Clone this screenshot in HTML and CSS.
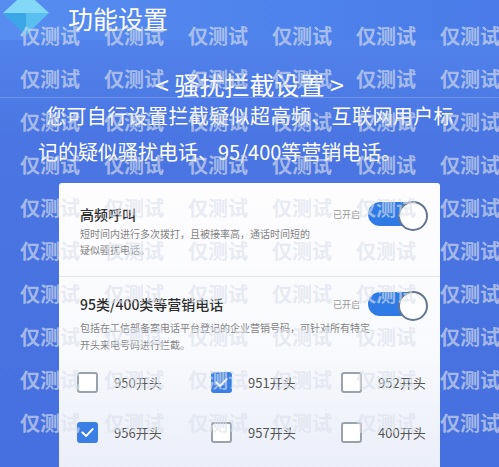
FILE: index.html
```html
<!DOCTYPE html>
<html lang="zh-CN">
  <head>
    <meta charset="UTF-8" />
    <meta name="viewport" content="width=device-width, initial-scale=1.0" />
    <title>功能设置</title>
    <link rel="stylesheet" href="styles.css">
  </head>
  <body>
    <div class="screen">
      <header class="topbar">
        <svg class="logo" width="46" height="40" viewBox="0 0 46 40">
          <polygon points="23,-8 46,13 23,35 0,13" fill="#58bff0" />
          <polygon points="23,-8 46,13 23,13 0,13" fill="#84d8f7" />
          <polygon points="0,13 23,35 23,13" fill="#3aa6e6" />
        </svg>
        <h1>功能设置</h1>
      </header>

      <div class="subbar">&lt; 骚扰拦截设置 &gt;</div>

      <div class="intro">
        <p class="line1">您可自行设置拦截疑似超高频、互联网用户标</p>
        <p class="line2">记的疑似骚扰电话、95/400等营销电话。</p>
      </div>

      <div class="card">
        <section class="item first">
          <div class="item-head">
            <h2>高频呼叫</h2>
            <span class="state">已开启</span>
            <span class="toggle"></span>
          </div>
          <p class="desc">短时间内进行多次拨打，且被接率高，通话时间短的<br />疑似骚扰电话。</p>
        </section>

        <section class="item second">
          <div class="item-head">
            <h2>95类/400类等营销电话</h2>
            <span class="state">已开启</span>
            <span class="toggle"></span>
          </div>
          <p class="desc">包括在工信部备案电话平台登记的企业营销号码，可针对所有特定<br />开头来电号码进行拦截。</p>

          <div class="options">
            <label class="option"><span class="box"></span>950开头</label>
            <label class="option"><span class="box checked"><svg viewBox="0 0 20 20" width="20" height="20"><polyline points="4,10 8.5,14 16,6" /></svg></span>951开头</label>
            <label class="option"><span class="box"></span>952开头</label>
            <label class="option"><span class="box checked"><svg viewBox="0 0 20 20" width="20" height="20"><polyline points="4,10 8.5,14 16,6" /></svg></span>956开头</label>
            <label class="option"><span class="box"></span>957开头</label>
            <label class="option"><span class="box"></span>400开头</label>
          </div>
        </section>
      </div>

      <!-- marca de agua -->
      <div class="watermark">
        <div class="wm-row"><span>仅测试</span><span>仅测试</span><span>仅测试</span><span>仅测试</span><span>仅测试</span><span>仅测试</span></div>
        <div class="wm-row"><span>仅测试</span><span>仅测试</span><span>仅测试</span><span>仅测试</span><span>仅测试</span><span>仅测试</span></div>
        <div class="wm-row"><span>仅测试</span><span>仅测试</span><span>仅测试</span><span>仅测试</span><span>仅测试</span><span>仅测试</span></div>
        <div class="wm-row"><span>仅测试</span><span>仅测试</span><span>仅测试</span><span>仅测试</span><span>仅测试</span><span>仅测试</span></div>
        <div class="wm-row"><span>仅测试</span><span>仅测试</span><span>仅测试</span><span>仅测试</span><span>仅测试</span><span>仅测试</span></div>
        <div class="wm-row"><span>仅测试</span><span>仅测试</span><span>仅测试</span><span>仅测试</span><span>仅测试</span><span>仅测试</span></div>
        <div class="wm-row"><span>仅测试</span><span>仅测试</span><span>仅测试</span><span>仅测试</span><span>仅测试</span><span>仅测试</span></div>
        <div class="wm-row"><span>仅测试</span><span>仅测试</span><span>仅测试</span><span>仅测试</span><span>仅测试</span><span>仅测试</span></div>
        <div class="wm-row"><span>仅测试</span><span>仅测试</span><span>仅测试</span><span>仅测试</span><span>仅测试</span><span>仅测试</span></div>
        <div class="wm-row"><span>仅测试</span><span>仅测试</span><span>仅测试</span><span>仅测试</span><span>仅测试</span><span>仅测试</span></div>
      </div>
    </div>
  </body>
</html>
```

FILE: styles.css
```css
* {
  box-sizing: border-box;
  margin: 0;
  padding: 0;
}

body {
  font-family: "Noto Sans CJK SC", "Noto Sans", sans-serif;
  background: #4870df;
}

.screen {
  position: relative;
  width: 499px;
  height: 467px;
  overflow: hidden;
  background: linear-gradient(180deg, #5487ee 0%, #4a75e2 30%, #4670df 100%);
}

/* cabecera */
.topbar {
  display: flex;
  align-items: center;
  height: 40px;
  background: linear-gradient(90deg, #578cf0, #4e82ec 60%, #4a7be8);
}

.logo {
  margin-left: 3px;
  align-self: flex-start;
}

.topbar h1 {
  margin-left: 19px;
  margin-top: -4px;
  font-size: 25px;
  font-weight: 400;
  line-height: 30px;
  color: #fff;
}

.subbar {
  height: 58px;
  padding-top: 30px;
  line-height: 28px;
  font-size: 25px;
  text-align: center;
  color: #fff;
  border-bottom: 1px solid rgba(255, 255, 255, 0.18);
}

.intro {
  color: #fff;
  font-size: 20px;
  line-height: 36px;
}

.intro .line1 {
  padding-left: 46px;
  letter-spacing: 0.4px;
}

.intro .line2 {
  padding-left: 38px;
}

/* tarjeta */
.card {
  margin: 13px 0 0 59px;
  width: 381px;
  height: 300px;
  border-radius: 3px;
  background: linear-gradient(180deg, #fdfdfe 0%, #f9fafd 55%, #e9edf9 100%);
}

.item {
  padding: 19px 13px 0 21px;
}

.item.first {
  padding-bottom: 18px;
  border-bottom: 1px solid #e4e6eb;
}

.item.second {
  padding-top: 15px;
}

.item-head {
  display: flex;
  align-items: center;
  height: 24px;
}

.item-head h2 {
  flex: 1;
  font-size: 14px;
  font-weight: 500;
  color: #2e2e2e;
}

.state {
  font-size: 9px;
  color: #9a9a9a;
  margin-right: 8px;
}

.toggle {
  display: flex;
  justify-content: flex-end;
  width: 59px;
  height: 24px;
  border-radius: 12px;
  background: #2f7be6;
}

.toggle::after {
  content: "";
  width: 26px;
  height: 26px;
  margin: -1px -1px 0 0;
  border-radius: 50%;
  background: #fff;
  border: 2px solid #66768f;
}

.desc {
  font-size: 10px;
  line-height: 16px;
  color: #848484;
}

.item.second .desc {
  margin-top: 3px;
  line-height: 17px;
}

.options {
  display: grid;
  grid-template-columns: 134px 130px 110px;
  grid-auto-rows: 50px;
  margin: 4px 0 0 -3px;
}

.option {
  display: flex;
  align-items: center;
  font-size: 13px;
  color: #555;
}

.box {
  display: flex;
  width: 21px;
  height: 21px;
  margin-right: 16px;
  border: 2px solid #9aa3ad;
  border-radius: 3px;
  background: #fff;
}

.box.checked {
  border-color: #3b7fe4;
  background: #3b7fe4;
  align-items: center;
  justify-content: center;
}

.box svg {
  width: 17px;
  height: 17px;
  fill: none;
  stroke: #fff;
  stroke-width: 2.4;
  stroke-linecap: round;
  stroke-linejoin: round;
}

/* marca de agua */
.watermark {
  position: absolute;
  top: 14px;
  left: 20px;
  pointer-events: none;
}

.wm-row {
  display: flex;
  height: 43px;
  align-items: center;
}

.wm-row span {
  width: 84px;
  flex-shrink: 0;
  font-size: 20px;
  font-weight: 700;
  color: rgba(220, 225, 236, 0.65);
}
```
